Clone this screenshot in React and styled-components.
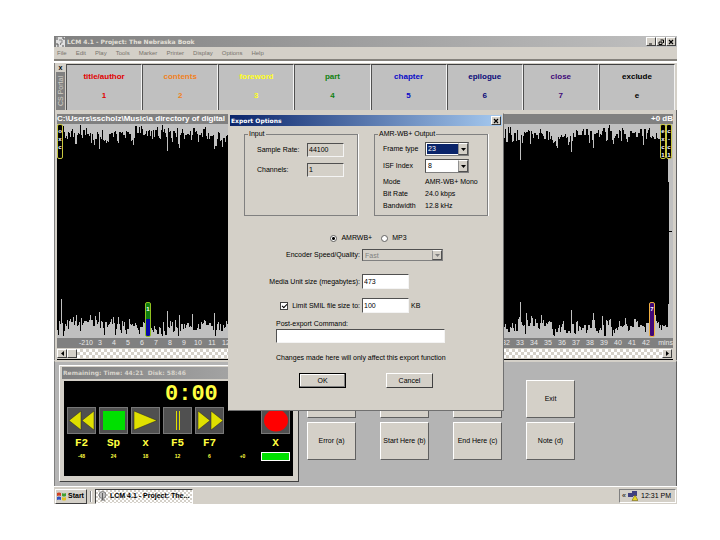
import React from "react";
import styled, { createGlobalStyle } from "styled-components";

const GlobalStyle = createGlobalStyle`
  * {
    box-sizing: border-box;
  }
  body {
    margin: 0;
    background: #fff;
    font-family: "Liberation Sans", Arial, sans-serif;
    font-size: 7px;
    line-height: 10px;
    color: #000;
  }
  button, input, select {
    font: inherit;
    color: inherit;
    margin: 0;
    padding: 0;
    border-radius: 0;
  }
`;

const Page = styled.div`
  padding: 36px 43px 36px 54px;
`;

const Desktop = styled.div`
  position: relative;
  background: #d4d0c8;
`;

const TitleBar = styled.header`
  display: flex;
  align-items: center;
  height: 11px;
  padding-left: 2px;
  gap: 2px;
  background: linear-gradient(to right, #808080, #c0c0c0);
  color: #e4e0d8;
  font-size: 7px;
  font-weight: 700;
  font-family: "DejaVu Sans", sans-serif;
  white-space: nowrap;
`;

const TitleText = styled.h1`
  flex: 1;
  margin: 0;
  font-size: 6px;
  line-height: 10px;
`;

const WindowButton = styled.button`
  display: flex;
  align-items: center;
  justify-content: center;
  width: 10px;
  height: 9px;
  background: #d4d0c8;
  border: 1px solid;
  border-color: #fff #404040 #404040 #fff;
  color: #000;
`;

const WindowButtons = styled.div`
  display: flex;
  padding-right: 1px;
`;

const MenuBar = styled.nav`
  display: flex;
  gap: 9px;
  height: 12px;
  padding: 1px 3px;
  color: #77736c;
  font-size: 6px;
`;

const MenuLink = styled.a`
  color: inherit;
  text-decoration: none;
`;

const Divider = styled.div`
  height: 4px;
  border-top: 2px solid #85827c;
  border-bottom: 2px solid #fff;
`;

const SectionBar = styled.div`
  display: flex;
  height: 47px;
  padding: 1px 2px 0 0;
  border-left: 1px solid #808080;
`;

const DockHandle = styled.div`
  display: flex;
  flex-direction: column;
  align-items: center;
  width: 11px;
`;

const DockClose = styled.button`
  height: 8px;
  background: none;
  border: 0;
  font-weight: 700;
  line-height: 6px;
`;

const DockName = styled.div`
  flex: 1;
  width: 9px;
  background: #808080;
  color: #d4d0c8;
  writing-mode: vertical-rl;
  transform: rotate(180deg);
  line-height: 9px;
  text-align: center;
  overflow: hidden;
`;

const Sections = styled.div`
  flex: 1;
  display: grid;
  grid-template-columns: repeat(8, 1fr);
`;

const SectionButton = styled.button`
  display: flex;
  flex-direction: column;
  align-items: center;
  gap: 9px;
  padding-top: 7px;
  background: #c0c0c0;
  border: 0 solid;
  border-width: 1px 1px 0 1px;
  border-color: #404040 #f4f4f4 #fff #505050;
  color: ${(props) => props.$color};
  font-size: 8px;
  font-weight: 700;
`;

const WavePanel = styled.section`
  padding: 4px 3px 0 2px;
  border-left: 1px solid #808080;
  border-right: 1px solid #606060;
`;

const WaveTitle = styled.div`
  display: flex;
  justify-content: space-between;
  height: 10px;
  background: #808080;
  color: #fff;
  font-size: 8px;
  font-weight: 700;
  white-space: nowrap;
`;

const WaveArea = styled.div`
  position: relative;
  height: 214px;
  background: #c0c0c0;
`;

const WaveSvg = styled.svg`
  display: block;
  width: 100%;
  height: 214px;
`;

const Flag = styled.div`
  position: absolute;
  top: ${(props) => props.$top || "0"};
  ${(props) => props.$side}: ${(props) => props.$at};
  width: 6px;
  height: 35px;
  padding-top: 2px;
  background: ${(props) => props.$bg || "#000"};
  border: 1px solid ${(props) => props.$edge || "#c8c840"};
  border-radius: 2px;
  color: #fff;
  font-size: 6px;
  font-weight: 700;
  line-height: 8px;
  text-align: center;
  word-break: break-all;
`;

const Ruler = styled.div`
  display: flex;
  height: 10px;
  padding-left: 22px;
  background: #808080;
  color: #e8e8e8;
`;

const RulerEdge = styled.span`
  width: ${(props) => props.$width};
  text-align: ${(props) => props.$align || "left"};
`;

const RulerTick = styled.span`
  flex: 1 1 0;
  min-width: 0;
  text-align: center;
`;

const ScrollBar = styled.div`
  display: flex;
  height: 11px;
  margin-top: 1px;
  padding: 0 1px 1px 0;
  border-bottom: 1px solid #000;
`;

const ScrollButton = styled.button`
  display: flex;
  align-items: center;
  justify-content: center;
  width: 10px;
  background: #d4d0c8;
  border: 1px solid;
  border-color: #fff #404040 #404040 #fff;
`;

const ScrollTrack = styled.div`
  flex: 1;
  background: repeating-conic-gradient(#d4d0c8 0 25%, #fff 0 50%) 0 0 / 6px 6px;
`;

const LowerPanel = styled.section`
  display: flex;
  align-items: flex-start;
  height: 126px;
  padding-left: 4px;
  background: #b4b4b4;
  border-left: 1px solid #808080;
  border-right: 1px solid #606060;
  border-top: 2px solid #d4d0c8;
`;

const Player = styled.div`
  width: 240px;
  margin-top: 3px;
  padding: 1px 5px 5px 2px;
  background: #d4d0c8;
  border: 1px solid;
  border-color: #fff #404040 #404040 #fff;
`;

const PlayerTitle = styled.h2`
  height: 12px;
  margin: 0 0 2px;
  padding-left: 1px;
  background: linear-gradient(to right, #808080, #b0b0b0);
  color: #d8d4cc;
  font-family: "DejaVu Sans", sans-serif;
  font-size: 6px;
  line-height: 12px;
`;

const PlayerScreen = styled.div`
  height: 95px;
  margin-left: 2px;
  padding: 1px 3px;
  background: #000;
  color: #ffff40;
  font-family: "Liberation Mono", monospace;
  font-weight: 700;
`;

const Clock = styled.div`
  padding-left: 98px;
  font-size: 22px;
  line-height: 25px;
`;

const Transport = styled.div`
  display: grid;
  grid-template-columns: repeat(5, 29px) 1fr 29px;
  column-gap: 3px;
  text-align: center;
`;

const TransportButton = styled.button`
  grid-column: ${(props) => props.$column || "auto"};
  height: 27px;
  background: #505050;
  border: 1px solid #787878;
  line-height: 0;
`;

const KeyLabel = styled.span`
  grid-column: ${(props) => props.$column || "auto"};
  font-size: 11px;
  line-height: 18px;
`;

const Level = styled.span`
  font-family: "Liberation Sans", sans-serif;
  font-size: 5px;
  line-height: 8px;
`;

const LevelMeter = styled.div`
  height: 9px;
  background: #00e000;
  border: 1px solid #fff;
`;

const CommandGrid = styled.div`
  display: grid;
  grid-template-columns: repeat(4, 49px);
  gap: 4px 24px;
  padding: 18px 0 0 8px;
`;

const CommandButton = styled.button`
  height: 38px;
  background: #d4d0c8;
  border: 1px solid;
  border-color: #fff #606060 #606060 #fff;
  font-size: 7px;
  white-space: nowrap;
`;

const TaskBar = styled.footer`
  display: flex;
  align-items: center;
  height: 18px;
  padding: 1px 1px 0;
  gap: 3px;
  border-top: 1px solid #fff;
`;

const StartButton = styled.button`
  display: flex;
  align-items: center;
  gap: 2px;
  width: 32px;
  height: 15px;
  padding-left: 1px;
  background: #d4d0c8;
  border: 1px solid;
  border-color: #fff #404040 #404040 #fff;
  font-weight: 700;
`;

const Grip = styled.span`
  height: 11px;
  border-left: 1px solid #808080;
  border-right: 1px solid #fff;
`;

const TaskButton = styled(StartButton)`
  width: 98px;
  padding-left: 2px;
  gap: 3px;
  border-color: #404040 #fff #fff #404040;
  background: repeating-conic-gradient(#d4d0c8 0 25%, #fff 0 50%) 0 0 / 4px 4px;
  white-space: nowrap;
`;

const Tray = styled.div`
  display: flex;
  align-items: center;
  justify-content: space-between;
  width: 57px;
  height: 14px;
  margin-left: auto;
  padding: 0 4px 0 2px;
  border: 1px solid;
  border-color: #808080 #fff #fff #808080;
`;

const DialogWindow = styled.section`
  position: absolute;
  top: 77px;
  left: 174px;
  width: 276px;
  padding: 1px 1px 22px;
  background: #d4d0c8;
  border: 1px solid;
  border-color: #d4d0c8 #707070 #707070 #d4d0c8;
`;

const DialogTitle = styled(TitleBar)`
  padding-left: 1px;
  background: linear-gradient(to right, #0a246a, #a6caf0);
  color: #fff;
`;

const DialogForm = styled.form`
  padding: 4px 14px 0;
`;

const Groups = styled.div`
  display: grid;
  grid-template-columns: 1fr 1fr;
  gap: 16px;
`;

const Group = styled.fieldset`
  min-width: 0;
  margin: 0;
  padding: 4px 8px 3px;
  border: 1px solid #808080;
  box-shadow: 1px 0 0 #fff;
`;

const Legend = styled.legend`
  margin-left: -5px;
  padding: 0 1px;
  line-height: 8px;
`;

const GroupRows = styled.div`
  display: grid;
  grid-template-columns: ${(props) => props.$columns};
  grid-auto-rows: ${(props) => props.$row};
  row-gap: ${(props) => props.$gap || "0"};
  align-items: center;
  margin: ${(props) => props.$margin || "0"};
  white-space: nowrap;
`;

const TextBox = styled.input`
  width: 100%;
  height: ${(props) => props.$height || "15px"};
  padding: 0 0 1px 1px;
  background: ${(props) => (props.readOnly ? "#d4d0c8" : "#fff")};
  border: 1px solid;
  border-color: #505050 #f4f4f4 #f4f4f4 #505050;
  outline: 0;
`;

const SelectBox = styled.span`
  position: relative;
  display: block;
  height: ${(props) => props.$height || "13px"};
  padding: 1px;
  background: ${(props) => (props.$disabled ? "#d4d0c8" : "#fff")};
  border: 1px solid;
  border-color: #505050 #808080 #808080 #505050;
`;

const Select = styled.select`
  display: block;
  width: 100%;
  height: 100%;
  padding-left: 1px;
  appearance: none;
  border: 0;
  outline: 0;
  opacity: 1;
  background: ${(props) => (props.$active ? "#0a246a" : "transparent")};
  color: ${(props) => (props.$active ? "#fff" : props.disabled ? "#808080" : "#000")};
`;

const SelectArrow = styled.span`
  position: absolute;
  top: 0;
  right: 0;
  bottom: 0;
  display: flex;
  align-items: center;
  justify-content: center;
  width: 10px;
  background: #d4d0c8;
  border: 1px solid;
  border-color: #fff #505050 #505050 #909090;
  pointer-events: none;
`;

const RadioRow = styled.div`
  display: flex;
  justify-content: center;
  gap: 9px;
  margin: 17px 0 6px;
  padding-left: 5px;
`;

const RadioLabel = styled.label`
  display: flex;
  align-items: center;
  gap: 4px;
`;

const Radio = styled.input`
  width: 7px;
  height: 7px;
  appearance: none;
  border: 1px solid #606060;
  border-radius: 50%;
  background: #fff;

  &:checked {
    background: radial-gradient(#000 0 1px, #fff 2px);
  }
`;

const FormRow = styled.div`
  display: grid;
  grid-template-columns: 116px ${(props) => props.$field || "47px"} auto;
  column-gap: 2px;
  align-items: center;
  margin-bottom: ${(props) => props.$bottom};
  white-space: nowrap;
`;

const RowLabel = styled.label`
  justify-self: end;
`;

const CheckLabel = styled(RowLabel)`
  display: flex;
  align-items: center;
  gap: 4px;
`;

const CheckBox = styled.input`
  display: grid;
  place-items: center;
  width: 8px;
  height: 8px;
  appearance: none;
  background: #fff;
  border: 1px solid #404040;

  &:checked::before {
    content: "";
    width: 4px;
    height: 2px;
    border: solid #000;
    border-width: 0 0 1px 1px;
    transform: rotate(-45deg);
  }
`;

const CommandField = styled.div`
  width: 169px;
  margin: 6px 0 10px 32px;
`;

const CommandLabel = styled.label`
  display: block;
`;

const Hint = styled.p`
  margin: 0 0 10px 32px;
  white-space: nowrap;
`;

const DialogButtons = styled.div`
  display: flex;
  gap: 40px;
  padding-left: 55px;
`;

const DialogButton = styled.button`
  width: 47px;
  height: 15px;
  background: #d4d0c8;
  border: 1px solid;
  border-color: ${(props) => (props.$primary ? "#000" : "#fff #404040 #404040 #fff")};
  box-shadow: ${(props) => (props.$primary ? "inset -1px -1px 0 #808080, inset 1px 1px 0 #fff" : "none")};
`;

const menus = ["File", "Edit", "Play", "Tools", "Marker", "Printer", "Display", "Options", "Help"];

const sections = [
  { name: "title/author", key: "1", color: "#e00000" },
  { name: "contents", key: "2", color: "#f08020" },
  { name: "foreword", key: "3", color: "#ffff20" },
  { name: "part", key: "4", color: "#108010" },
  { name: "chapter", key: "5", color: "#0808c8" },
  { name: "epilogue", key: "6", color: "#080878" },
  { name: "close", key: "7", color: "#400878" },
  { name: "exclude", key: "e", color: "#000" },
];

const transport = [
  { name: "Rewind", key: "F2" },
  { name: "Stop", key: "Sp" },
  { name: "Play", key: "x" },
  { name: "Pause", key: "F5" },
  { name: "Forward", key: "F7" },
  { name: "Record", key: "X" },
];

const levels = ["-48", "24", "18", "12", "6", "+0"];

const commands = ["Play", "Stop", "Save", "Exit", "Error (a)", "Start Here (b)", "End Here (c)", "Note (d)"];

const minutes = Array.from({ length: 40 }, (_, i) => i + 3);

const topPeaks = { 42: 25, 110: 27, 122: 24, 157: 25, 464: 36, 515: 28, 537: 24 };
const bottomPeaks = { 4: 38, 19: 22, 42: 25, 110: 26, 122: 22, 157: 24, 464: 35, 515: 27, 537: 24 };

// Repeatable noise between 0 and 1
const noise = (n) => {
  const v = Math.sin(n * 12.9898) * 43758.5453;
  return v - Math.floor(v);
};

const makeEdge = (seed, peaks) =>
  Array.from({ length: 612 }, (_, x) => {
    if (peaks[x]) {
      return peaks[x];
    }
    const swell = 9 + Math.sin(x / 9 + seed) * 2 + Math.sin(x / 23) * 2;
    const step = noise(Math.floor(x / 2) + seed) * 10 - 4;
    const spike = noise(x * 3 + seed) > 0.7 ? noise(x * 7 + seed) * 9 : 0;
    const dip = noise(x * 5 + seed) > 0.8 ? noise(x * 11 + seed) * 9 : 0;
    return Math.max(1, Math.round(swell + step + spike - dip));
  });

const topEdge = makeEdge(71, topPeaks);
const bottomEdge = makeEdge(313, bottomPeaks);

const wavePath = () => {
  const top = topEdge.map((h, x) => `L${x} ${h}H${x + 1}`).join("");
  const bottom = bottomEdge
    .map((h, x) => `L${x + 1} ${213 - h}H${x}`)
    .reverse()
    .join("");
  return `M0 ${topEdge[0]}${top}${bottom}Z`;
};

const CloseGlyph = () => (
  <svg width="6" height="6" viewBox="0 0 6 6">
    <path d="M1 1L5 5M5 1L1 5" stroke="#000" strokeWidth="1.2" />
  </svg>
);

const Arrow = ({ d, color = "#000" }) => (
  <svg width="5" height="5" viewBox="0 0 5 5">
    <path d={d} fill={color} />
  </svg>
);

const Dropdown = ({ id, value, active, disabled, height }) => (
  <SelectBox $disabled={disabled} $height={height}>
    <Select id={id} defaultValue={value} disabled={disabled} $active={active}>
      <option>{value}</option>
    </Select>
    <SelectArrow>
      <Arrow d="M0 1H5L2.5 4Z" color={disabled ? "#808080" : "#000"} />
    </SelectArrow>
  </SelectBox>
);

const TransportIcon = ({ name }) => (
  <svg width="27" height="25" viewBox="0 0 27 25">
    {name === "Rewind" && <path d="M13 3V22L1 12.5ZM26 3V22L14 12.5Z" fill="#e0e000" stroke="#222" strokeWidth=".5" />}
    {name === "Stop" && <path d="M3 3H25V22H3Z" fill="#00e000" />}
    {name === "Play" && <path d="M2 3L25 12.5L2 22Z" fill="#e0e000" stroke="#222" strokeWidth=".5" />}
    {name === "Pause" && <path d="M12.5 3V22M15.5 3V22" stroke="#e0e000" />}
    {name === "Forward" && <path d="M2 3V22L14 12.5ZM15 3V22L27 12.5Z" fill="#e0e000" stroke="#222" strokeWidth=".5" />}
    {name === "Record" && <ellipse cx="14" cy="12.5" rx="12" ry="11" fill="#f00" />}
  </svg>
);

const ExportDialog = () => (
  <DialogWindow role="dialog" aria-label="Export Options">
    <DialogTitle>
      <TitleText as="h2">Export Options</TitleText>
      <WindowButtons>
        <WindowButton aria-label="Close">
          <CloseGlyph />
        </WindowButton>
      </WindowButtons>
    </DialogTitle>
    <DialogForm onSubmit={(e) => e.preventDefault()}>
      <Groups>
        <Group>
          <Legend>Input</Legend>
          <GroupRows $columns="50px 37px" $row="15px" $gap="5px" $margin="0 0 0 4px">
            <label htmlFor="rate">Sample Rate:</label>
            <TextBox id="rate" readOnly value="44100" $height="14px" />
            <label htmlFor="channels">Channels:</label>
            <TextBox id="channels" readOnly value="1" $height="14px" />
          </GroupRows>
        </Group>
        <Group>
          <Legend>AMR-WB+ Output</Legend>
          <GroupRows $columns="42px 44px" $row="14px" $gap="3px">
            <label htmlFor="frame">Frame type</label>
            <Dropdown id="frame" value="23" active height="14px" />
            <label htmlFor="isf">ISF Index</label>
            <Dropdown id="isf" value="8" height="14px" />
          </GroupRows>
          <GroupRows $columns="42px auto" $row="12px" $margin="3px 0 0">
            <span>Mode</span>
            <span>AMR-WB+ Mono</span>
            <span>Bit Rate</span>
            <span>24.0 kbps</span>
            <span>Bandwidth</span>
            <span>12.8 kHz</span>
          </GroupRows>
        </Group>
      </Groups>
      <RadioRow>
        <RadioLabel>
          <Radio type="radio" name="format" defaultChecked />
          AMRWB+
        </RadioLabel>
        <RadioLabel>
          <Radio type="radio" name="format" />
          MP3
        </RadioLabel>
      </RadioRow>
      <FormRow $field="81px" $bottom="13px">
        <RowLabel htmlFor="speed">Encoder Speed/Quality:</RowLabel>
        <Dropdown id="speed" value="Fast" disabled height="12px" />
      </FormRow>
      <FormRow $bottom="9px">
        <RowLabel htmlFor="unit">Media Unit size (megabytes):</RowLabel>
        <TextBox id="unit" defaultValue="473" />
      </FormRow>
      <FormRow $bottom="0">
        <CheckLabel>
          <CheckBox type="checkbox" defaultChecked />
          Limit SMIL file size to:
        </CheckLabel>
        <TextBox id="smil" aria-label="SMIL file size" defaultValue="100" />
        <label htmlFor="smil">KB</label>
      </FormRow>
      <CommandField>
        <CommandLabel htmlFor="command">Post-export Command:</CommandLabel>
        <TextBox id="command" $height="14px" />
      </CommandField>
      <Hint>Changes made here will only affect this export function</Hint>
      <DialogButtons>
        <DialogButton $primary>OK</DialogButton>
        <DialogButton type="button">Cancel</DialogButton>
      </DialogButtons>
    </DialogForm>
  </DialogWindow>
);

const App = () => (
  <Page>
    <GlobalStyle />
    <Desktop>
      <TitleBar>
        <svg width="9" height="10" viewBox="0 0 9 10">
          <rect width="9" height="10" fill="#e0e0e0" />
          <path d="M1 0V3M0 7H2V10M7 0V2H9M7 10V8" stroke="#555" fill="none" />
          <path d="M3 3H6V6H4.500V8" stroke="#888" fill="none" />
        </svg>
        <TitleText>LCM 4.1 - Project: The Nebraska Book</TitleText>
        <WindowButtons>
          <WindowButton aria-label="Minimize">
            <svg width="6" height="6" viewBox="0 0 6 6">
              <path d="M1 5H4" stroke="#000" />
            </svg>
          </WindowButton>
          <WindowButton aria-label="Restore">
            <svg width="6" height="6" viewBox="0 0 6 6">
              <path d="M2.5 1H5.500V4M1 3H4V5.500H1Z" stroke="#000" fill="none" />
            </svg>
          </WindowButton>
          <WindowButton aria-label="Close">
            <CloseGlyph />
          </WindowButton>
        </WindowButtons>
      </TitleBar>
      <MenuBar>
        {menus.map((menu) => (
          <MenuLink href="#" key={menu}>
            {menu}
          </MenuLink>
        ))}
      </MenuBar>
      <Divider />
      <SectionBar>
        <DockHandle>
          <DockClose>x</DockClose>
          <DockName>CS Portal</DockName>
        </DockHandle>
        <Sections>
          {sections.map((s) => (
            <SectionButton $color={s.color} key={s.key}>
              <span>{s.name}</span>
              <span>{s.key}</span>
            </SectionButton>
          ))}
        </Sections>
      </SectionBar>
      <WavePanel>
        <WaveTitle>
          <span>C:\Users\sscholz\Music\a directory of digital</span>
          <span>+0 dB</span>
        </WaveTitle>
        <WaveArea>
          <WaveSvg viewBox="0 0 617 214" preserveAspectRatio="none" shapeRendering="crispEdges">
            <path d={wavePath()} fill="#000" />
            <path d="M611 58H613V107H616V108H613V180H611Z" fill="#000" />
          </WaveSvg>
          <Flag $side="left" $at="0">
            oxc
          </Flag>
          <Flag $side="right" $at="7px">
            exc1
          </Flag>
          <Flag $side="right" $at="1px">
            c-c1
          </Flag>
          <Flag
            $side="left"
            $at="88px"
            $top="178px"
            $bg="linear-gradient(#108010 0 16px, #0808a8 16px)"
            $edge="#90c020"
          >
            1
          </Flag>
          <Flag $side="right" $at="18px" $top="178px" $bg="#400878" $edge="#f0b040">
            7
          </Flag>
        </WaveArea>
        <Ruler>
          <RulerEdge $width="14px">-210</RulerEdge>
          {minutes.map((m) => (
            <RulerTick key={m}>{m}</RulerTick>
          ))}
          <RulerEdge $width="20px" $align="right">
            mins
          </RulerEdge>
        </Ruler>
        <ScrollBar>
          <ScrollButton aria-label="Scroll left">
            <Arrow d="M4 0V5L1 2.500Z" />
          </ScrollButton>
          <ScrollButton aria-label="Scroll position" />
          <ScrollTrack />
          <ScrollButton aria-label="Scroll right">
            <Arrow d="M1 0V5L4 2.500Z" />
          </ScrollButton>
        </ScrollBar>
      </WavePanel>
      <LowerPanel>
        <Player>
          <PlayerTitle>Remaining: Time: 44:21 &nbsp;Disk: 58:46</PlayerTitle>
          <PlayerScreen>
            <Clock>0:00</Clock>
            <Transport>
              {transport.map((t) => (
                <TransportButton key={t.name} aria-label={t.name} $column={t.key === "X" ? "7" : ""}>
                  <TransportIcon name={t.name} />
                </TransportButton>
              ))}
              {transport.map((t) => (
                <KeyLabel key={t.name} $column={t.key === "X" ? "7" : ""}>
                  {t.key}
                </KeyLabel>
              ))}
              {levels.map((l) => (
                <Level key={l}>{l}</Level>
              ))}
              <LevelMeter />
            </Transport>
          </PlayerScreen>
        </Player>
        <CommandGrid>
          {commands.map((c) => (
            <CommandButton key={c}>{c}</CommandButton>
          ))}
        </CommandGrid>
      </LowerPanel>
      <TaskBar>
        <StartButton>
          <svg width="9" height="9" viewBox="0 0 9 9">
            <path d="M0 1Q2 0 4 1V4Q2 3 0 4Z" fill="#d04020" />
            <path d="M5 1Q7 2 9 1V4Q7 5 5 4Z" fill="#40a030" />
            <path d="M0 5Q2 4 4 5V8Q2 7 0 8Z" fill="#3050c0" />
            <path d="M5 5Q7 6 9 5V8Q7 9 5 8Z" fill="#e0c020" />
          </svg>
          Start
        </StartButton>
        <Grip />
        <TaskButton>
          <svg width="9" height="10" viewBox="0 0 9 10">
            <circle cx="4.5" cy="4" r="3.500" fill="#c0c0c0" stroke="#808080" />
            <path d="M4.500 2V9M3 9H7" stroke="#606060" />
          </svg>
          LCM 4.1 - Project: The...
        </TaskButton>
        <Tray>
          <span>«</span>
          <svg width="10" height="10" viewBox="0 0 10 10">
            <path d="M0 2H5V6H0ZM4 0H9V5H4Z" fill="#404080" />
            <path d="M7 4L10 9.500H4Z" fill="#e8d820" stroke="#605000" strokeWidth=".5" />
          </svg>
          <span>12:31 PM</span>
        </Tray>
      </TaskBar>
      <ExportDialog />
    </Desktop>
  </Page>
);

export default App;
